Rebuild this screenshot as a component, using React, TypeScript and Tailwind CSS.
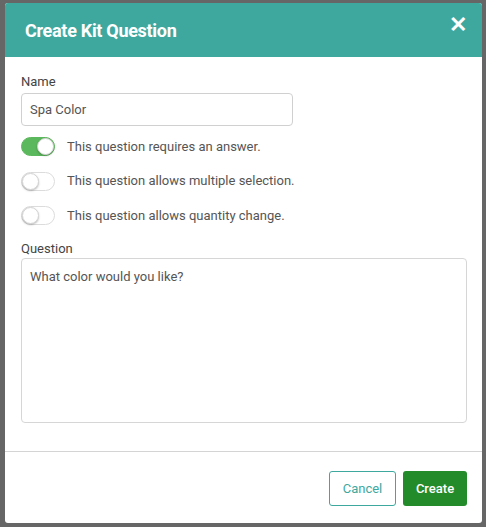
import React, { useState } from "react";

const Toggle: React.FC<{ on: boolean; onChange: () => void }> = ({ on, onChange }) => (
  <button
    type="button"
    onClick={onChange}
    className={`relative w-[34px] h-[19px] rounded-full border shrink-0 ${
      on ? "bg-[#5cb85c] border-[#5cb85c]" : "bg-white border-[#dcdcdc]"
    }`}
  >
    <span
      className={`absolute top-[0px] w-[17px] h-[17px] rounded-full bg-white border border-[#d4d4d4] shadow-[0_1px_2px_rgba(0,0,0,0.25)] ${
        on ? "left-[15px]" : "left-[0px]"
      }`}
    />
  </button>
);

const App: React.FC = () => {
  const [name, setName] = useState("Spa Color");
  const [question, setQuestion] = useState("What color would you like?");
  const [flags, setFlags] = useState({ required: true, multiple: false, quantity: false });

  const flip = (k: keyof typeof flags) => setFlags({ ...flags, [k]: !flags[k] });

  const rows: { key: keyof typeof flags; label: string }[] = [
    { key: "required", label: "This question requires an answer." },
    { key: "multiple", label: "This question allows multiple selection." },
    { key: "quantity", label: "This question allows quantity change." },
  ];

  return (
    <div className="w-[486px] h-[527px] bg-[#666666] pt-[3px] pl-[5px] font-['Roboto',sans-serif]">
      <div className="w-[477px] h-[520px] bg-white rounded-[3px] overflow-hidden flex flex-col">
        <div className="h-[54px] bg-[#3ea89f] flex items-center justify-between pl-[20px] pr-[15px]">
          <h1 className="text-white text-[18px] font-bold tracking-[-0.3px]">Create Kit Question</h1>
          <span className="text-white text-[22px] font-bold leading-none -mt-[11px]">✕</span>
        </div>

        <div className="px-[16px] pt-[17px] flex-1">
          <label className="block text-[13px] text-[#444] leading-[16px]">Name</label>
          <input
            value={name}
            onChange={(e) => setName(e.target.value)}
            className="mt-[3px] w-[272px] h-[33px] border border-[#d0d0d0] rounded-[4px] px-[8px] text-[13px] text-[#555] outline-none"
          />

          <div className="mt-[11px] flex flex-col gap-[15.5px]">
            {rows.map((r) => (
              <div key={r.key} className="flex items-center gap-[12px] h-[19px]">
                <Toggle on={flags[r.key]} onChange={() => flip(r.key)} />
                <span className="text-[13px] text-[#555]">{r.label}</span>
              </div>
            ))}
          </div>

          <label className="block mt-[16px] text-[13px] text-[#444] leading-[16px]">Question</label>
          <textarea
            value={question}
            onChange={(e) => setQuestion(e.target.value)}
            className="mt-[1px] w-[446px] h-[165px] border border-[#d6d6d6] rounded-[4px] px-[8px] py-[8px] text-[13px] text-[#555] outline-none resize-none"
          />
        </div>

        <div className="h-[72px] border-t border-[#d4d4d4] flex items-center justify-end gap-[7px] pr-[15px] pt-[2px]">
          <button className="w-[67px] h-[35px] border border-[#3ea89f] rounded-[3px] text-[#3ea89f] text-[13px]">
            Cancel
          </button>
          <button className="w-[64px] h-[35px] bg-[#238b2a] rounded-[3px] text-white text-[13px] font-medium">
            Create
          </button>
        </div>
      </div>
    </div>
  );
};

export default App;
